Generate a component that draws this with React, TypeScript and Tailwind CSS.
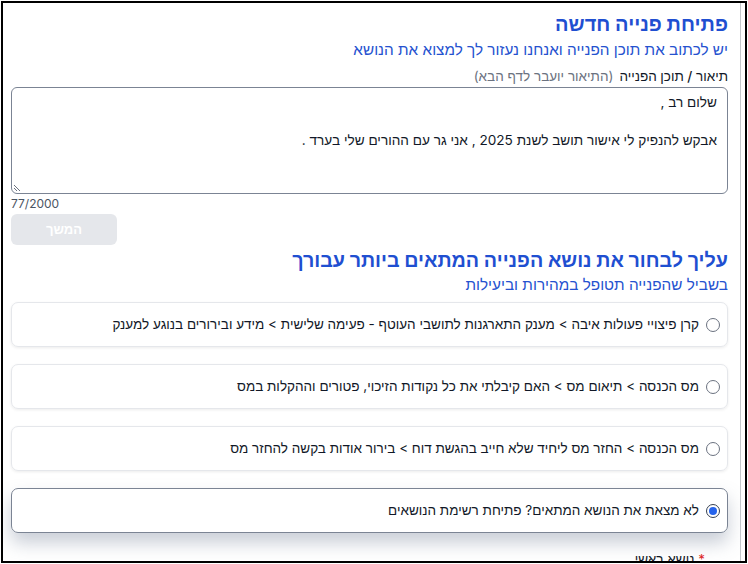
import React from "react";

const topics = [
  "קרן פיצויי פעולות איבה > מענק התארגנות לתושבי העוטף - פעימה שלישית > מידע ובירורים בנוגע למענק",
  "מס הכנסה > תיאום מס > האם קיבלתי את כל נקודות הזיכוי, פטורים וההקלות במס",
  "מס הכנסה > החזר מס ליחיד שלא חייב בהגשת דוח > בירור אודות בקשה להחזר מס",
];

const Radio = ({ checked }: { checked?: boolean }) => (
  <span
    className={
      checked
        ? "w-[14px] h-[14px] rounded-full border-[1.5px] border-[#374151] flex items-center justify-center shrink-0"
        : "w-[14px] h-[14px] rounded-full border border-[#6b7280] shrink-0"
    }
  >
    {checked && <span className="w-[8px] h-[8px] rounded-full bg-[#2563eb]" />}
  </span>
);

export default function App() {
  return (
    <div className="w-[748px] h-[564px] bg-white pt-px pl-px overflow-hidden" style={{ fontFamily: 'Inter, "Liberation Sans", "Noto Sans", sans-serif' }}>
      <div dir="rtl" className="w-[746px] h-[562px] border-2 border-black flex overflow-hidden">
        {/* scrollbar strip */}
        <div className="w-[5px] shrink-0 border-l border-[#c4c7cc]" />

        <div className="flex-1 pr-[12px] pl-[8px] pt-[7px] text-[#1f2937]">
          <h1 className="text-[20px] leading-[28px] font-bold text-[#1f4fd1]">פתיחת פנייה חדשה</h1>
          <p className="text-[15.3px] leading-[22px] text-[#2552cf] mt-[1px]">
            יש לכתוב את תוכן הפנייה ואנחנו נעזור לך למצוא את הנושא
          </p>

          <div className="mt-[7px] text-[13.5px] leading-[16px] flex gap-[6px]">
            <span className="font-medium text-[#111827]">תיאור / תוכן הפנייה</span>
            <span className="text-[#6b7280]">(התיאור יועבר לדף הבא)</span>
          </div>

          <div className="relative mt-[3px] h-[107px] border border-[#7b8494] rounded-[6px] px-[10px] pt-[5px] text-[13.6px] leading-[19px] text-[#111827]">
            <p>שלום רב ,</p>
            <p>&nbsp;</p>
            <p>אבקש להנפיק לי אישור תושב לשנת 2025 , אני גר עם ההורים שלי בערד .</p>
            <svg className="absolute left-[1px] bottom-[1px]" width="8" height="8" viewBox="0 0 8 8">
              <path d="M1 4 L4 7 M1 1 L7 7" stroke="#6b7280" strokeWidth="1" />
            </svg>
          </div>

          <div dir="ltr" className="text-[12px] leading-[16px] text-[#4b5563] mt-[2px]">77/2000</div>

          <div className="flex justify-end mt-[2px]">
            <button className="w-[106px] h-[31px] rounded-[6px] bg-[#e5e7eb] text-white text-[13px] font-semibold">
              המשך
            </button>
          </div>

          <h2 className="mt-[1px] text-[19.7px] leading-[28px] font-bold text-[#1f4fd1]">
            עליך לבחור את נושא הפנייה המתאים ביותר עבורך
          </h2>
          <p className="text-[15.3px] leading-[22px] text-[#2552cf]">בשביל שהפנייה תטופל במהירות וביעילות</p>

          <div className="mt-[6px] flex flex-col gap-[17px]">
            {topics.map((t, i) => (
              <div
                key={i}
                className="h-[45px] rounded-[7px] border border-[#e5e7eb] shadow-[0_1px_3px_rgba(0,0,0,0.08)] flex items-center gap-[7px] pr-[7px] text-[13.5px] text-[#111827]"
              >
                <Radio />
                <span>{t}</span>
              </div>
            ))}
            <div className="h-[45px] rounded-[7px] border border-[#7b8494] shadow-[0_10px_18px_rgba(100,116,139,0.35)] flex items-center gap-[7px] pr-[7px] text-[13.5px] text-[#111827]">
              <Radio checked />
              <span>לא מצאת את הנושא המתאים? פתיחת רשימת הנושאים</span>
            </div>
          </div>

          <div className="mt-[18px] pr-[23px] text-[13.5px] leading-[16px] text-[#111827]">
            <span className="text-[#dc2626]">*</span> נושא ראשי
          </div>
        </div>
      </div>
    </div>
  );
}
